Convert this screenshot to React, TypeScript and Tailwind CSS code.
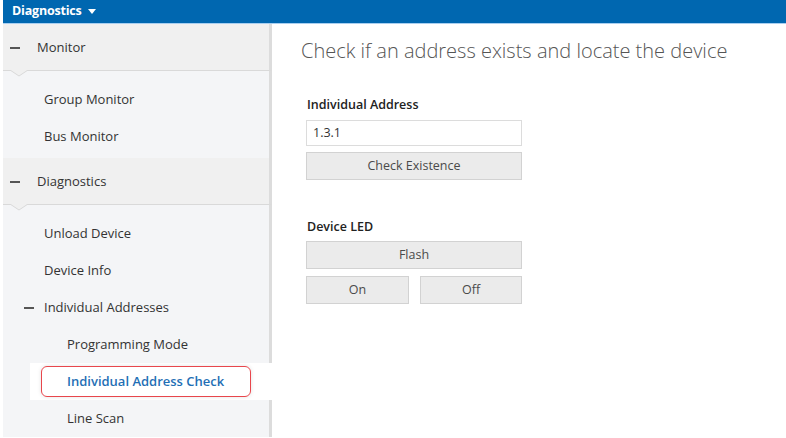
import React from "react";

type NavItem = { label: string; indent: number; minus?: boolean; selected?: boolean };

const groups: { title: string; items: NavItem[] }[] = [
    {
        title: "Monitor",
        items: [
            { label: "Group Monitor", indent: 1 },
            { label: "Bus Monitor", indent: 1 },
        ],
    },
    {
        title: "Diagnostics",
        items: [
            { label: "Unload Device", indent: 1 },
            { label: "Device Info", indent: 1 },
            { label: "Individual Addresses", indent: 1, minus: true },
            { label: "Programming Mode", indent: 2 },
            { label: "Individual Address Check", indent: 2, selected: true },
            { label: "Line Scan", indent: 2 },
        ],
    },
];

function Minus() {
    return <span className="block w-[10px] h-[2px] bg-[#555]"></span>;
}

function Button({ label, className = "" }: { label: string; className?: string }) {
    return (
        <div className={`h-[28px] flex items-center justify-center bg-[#ebebeb] border border-[#d2d2d2] text-[12.5px] text-[#4a4a4a] ${className}`}>
            {label}
        </div>
    );
}

export default function App() {
    return (
        <div className="w-[786px] h-[438px] overflow-hidden bg-white pl-[3px] flex flex-col" style={{ fontFamily: '"Open Sans", "Noto Sans", sans-serif' }}>
            {/* Top bar */}
            <div className="h-[24px] shrink-0 bg-[#0067b0] border-b border-[#a9cff0] flex items-center pl-[9px] gap-[6px]">
                <span className="text-white font-bold text-[12.5px] tracking-[-0.2px]">Diagnostics</span>
                <svg width="8" height="5" viewBox="0 0 8 5"><path d="M0 0 H8 L4 5 Z" fill="#fff" /></svg>
            </div>

            <div className="flex flex-1 min-h-0">
                {/* Sidebar */}
                <div className="w-[269px] shrink-0 flex flex-col">
                    {groups.map((group) => (
                        <div key={group.title} className="flex flex-col">
                            <div className="relative h-[47px] shrink-0 bg-[#f0f0f0] border-b border-[#d9d9d9] border-r-[3px] border-r-[#dcdcdc] flex items-center pl-[7px] pt-[2px] gap-[17px]">
                                <Minus />
                                <span className="text-[13px] text-[#333]">{group.title}</span>
                                <svg className="absolute left-[7px] -bottom-[7px]" width="18" height="7" viewBox="0 0 18 7">
                                    <path d="M0 0 L9 6 L18 0" fill="#f0f0f0" stroke="#d9d9d9" strokeWidth="1" />
                                </svg>
                            </div>
                            <div className="bg-[#f4f5f7] border-r-[3px] border-[#dcdcdc] h-[10px]"></div>
                            {group.items.map((item) =>
                                item.selected ? (
                                    <div key={item.label} className="h-[37px] flex bg-[#f4f5f7]">
                                        <div className="ml-[27px] flex-1 bg-white flex items-center pl-[11px] pr-[21px]">
                                            <div className="h-[31px] flex-1 rounded-[6px] border-[1.5px] border-[#e8464c] shadow-[0_0_4px_rgba(0,0,0,0.12)] flex items-center pl-[25px]">
                                                <span className="text-[13px] font-semibold text-[#1f6fb5]">{item.label}</span>
                                            </div>
                                        </div>
                                    </div>
                                ) : (
                                    <div
                                        key={item.label}
                                        className={`h-[37px] flex items-center bg-[#f4f5f7] border-r-[3px] border-[#dcdcdc] ${item.indent === 2 ? "pl-[64px]" : item.minus ? "pl-[21px] gap-[10px]" : "pl-[41px]"}`}
                                    >
                                        {item.minus && <Minus />}
                                        <span className="text-[13px] text-[#333]">{item.label}</span>
                                    </div>
                                )
                            )}
                            {group.title === "Monitor" && <div className="bg-[#f4f5f7] border-r-[3px] border-[#dcdcdc] h-[3px]"></div>}
                        </div>
                    ))}
                </div>

                {/* Content */}
                <div className="flex-1 pl-[29px] pt-[14px]">
                    <h1 className="text-[20px] font-light text-[#555] leading-[26px]">Check if an address exists and locate the device</h1>

                    <div className="w-[216px] ml-[5px] mt-[33px] flex flex-col">
                        <div className="text-[12.5px] font-semibold text-[#222] leading-[16px] pl-[1px]">Individual Address</div>
                        <div className="mt-[7px] h-[26px] border border-[#dcdcdc] bg-white flex items-center px-[6px] text-[12.5px] text-[#333]">1.3.1</div>
                        <Button label="Check Existence" className="mt-[6px]" />

                        <div className="mt-[39px] text-[12.5px] font-semibold text-[#222] leading-[16px] pl-[1px]">Device LED</div>
                        <Button label="Flash" className="mt-[6px]" />
                        <div className="mt-[7px] flex justify-between">
                            <Button label="On" className="w-[103px]" />
                            <Button label="Off" className="w-[102px]" />
                        </div>
                    </div>
                </div>
            </div>
        </div>
    );
}
